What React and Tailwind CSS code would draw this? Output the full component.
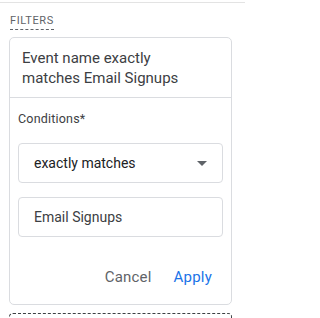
export default function App() {
  return (
    <div className="w-[245px] h-[318px] overflow-hidden bg-white font-['Roboto',sans-serif]">
      <div className="mt-[2px] border-t border-[#e3e3e3]" />

      {/* Section label */}
      <div className="pl-[10px] pt-[11px] flex">
        <div className="text-[11px] leading-[14px] tracking-[0.6px] text-[#5f6368] border-b border-dashed border-[#5f6368] pb-[1px]">
          FILTERS
        </div>
      </div>

      {/* Filter card */}
      <div className="mx-[9px] mt-[7px] w-[223px] h-[268px] border border-[#dadce0] rounded-[5px] flex flex-col">
        <div className="pl-[12px] pr-[40px] pt-[10px] pb-[9px] text-[15px] leading-[20px] text-[#3c4043]">
          Event name exactly matches Email Signups
        </div>
        <div className="border-t border-[#dadce0]" />

        <div className="px-[8px] pt-[13px] flex flex-col">
          <div className="text-[12.5px] leading-[16px] text-[#3c4043] tracking-[0.2px]">Conditions*</div>

          <div className="mt-[16px] h-[40px] border border-[#dadce0] rounded-[4px] flex items-center pl-[15px] pr-[15px]">
            <span className="flex-1 text-[14px] text-[#202124]">exactly matches</span>
            <svg width="10" height="5" viewBox="0 0 10 5">
              <path d="M0 0 L10 0 L5 5 Z" fill="#5f6368" />
            </svg>
          </div>

          <div className="mt-[14px] h-[40px] border border-[#dadce0] rounded-[4px] flex items-center pl-[15px]">
            <span className="text-[14px] text-[#3c4043]">Email Signups</span>
          </div>

          <div className="mt-[30px] flex justify-end gap-[22px] pr-[11px] text-[15px] leading-[20px] tracking-[0.2px]">
            <button className="text-[#5f6368]">Cancel</button>
            <button className="text-[#1a73e8]">Apply</button>
          </div>
        </div>
      </div>

      <div className="mx-[9px] mt-[8px] w-[223px] h-[30px] border border-dashed border-[#3c4043] rounded-[4px]" />
    </div>
  );
}
